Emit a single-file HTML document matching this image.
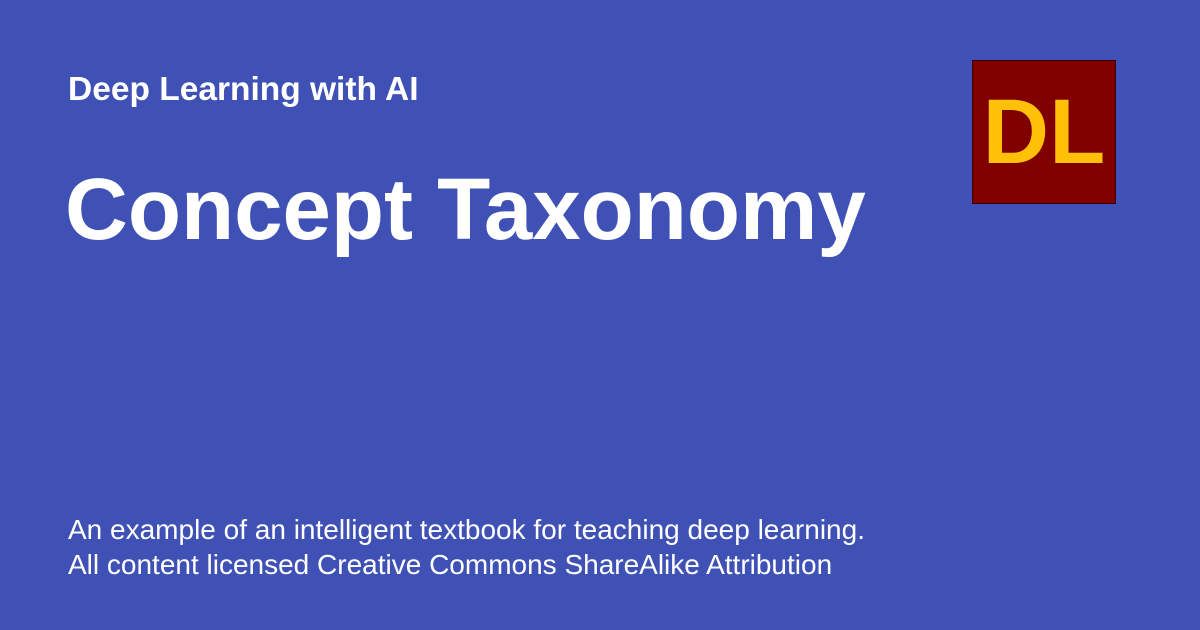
<!DOCTYPE html>
<html><head><meta charset="utf-8"><style>
html,body{margin:0;padding:0}
body{width:1200px;height:630px;background:#3f51b5;position:relative;overflow:hidden;font-family:"Liberation Sans",sans-serif;color:#fff}
.sub{position:absolute;left:68px;top:71px;font-size:33.5px;font-weight:bold;white-space:nowrap}
.title{position:absolute;left:65px;top:160px;font-size:87px;font-weight:bold;white-space:nowrap}
.foot{position:absolute;left:68px;top:512px;font-size:28px;line-height:35px;white-space:nowrap}
.logo{position:absolute;left:972px;top:60px;width:142px;height:142px;background:#800000;border:1px solid #3a0000;color:#ffc107;font-weight:bold;font-size:92px;display:flex;align-items:center;justify-content:center}
</style></head><body>
<div class="sub">Deep Learning with AI</div>
<div class="title">Concept Taxonomy</div>
<div class="foot">An example of an intelligent textbook for teaching deep learning.<br>All content licensed Creative Commons ShareAlike Attribution</div>
<div class="logo">DL</div>
</body></html>
